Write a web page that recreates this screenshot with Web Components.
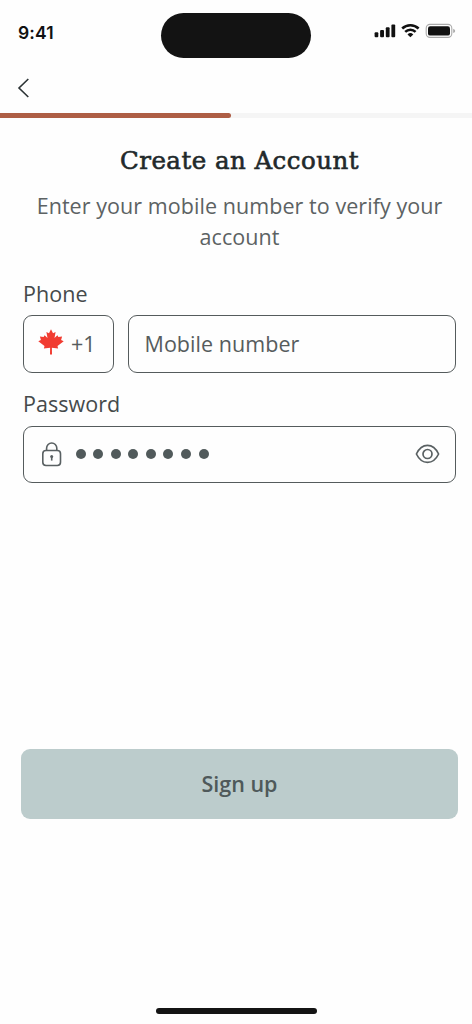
<!DOCTYPE html>
<html lang="en">
<head>
<meta charset="utf-8">
<title>Create an Account</title>
<style>
html,body{margin:0;background:#fefefe}
body{font-family:"Open Sans","Noto Sans",sans-serif;color:#4a4f50}
</style>
</head>
<body>
<signup-screen></signup-screen>
<script>
function define(name, html) {
  const tpl = document.createElement('template');
  tpl.innerHTML = html;
  customElements.define(name, class extends HTMLElement {
    constructor() {
      super();
      this.attachShadow({mode: 'open'}).appendChild(tpl.content.cloneNode(true));
    }
  });
}

define('status-bar', `
<style>
:host{display:grid;grid-template-columns:1fr 150px 1fr;height:58px;box-sizing:border-box;padding-top:13px;font-family:Inter,sans-serif;color:#111}
.time{font-size:17.5px;font-weight:600;line-height:22px;padding:9px 0 0 18px;letter-spacing:.15px}
.island{background:#131313;border-radius:23px;height:45px}
.sys{display:block;justify-self:end;margin:9px 16px 0 0}
</style>
<div class="time">9:41</div>
<div class="island"></div>
<svg class="sys" width="84" height="18" viewBox="372 22 84 18">
<g fill="#111"><rect x="374.6" y="32.3" width="3.7" height="4.9" rx="1"/><rect x="380.1" y="30" width="3.9" height="7.2" rx="1"/><rect x="385.8" y="27.3" width="3.8" height="9.9" rx="1"/><rect x="391.4" y="24.4" width="3.8" height="12.8" rx="1"/></g>
<g fill="none" stroke="#111" stroke-width="2.5"><path d="M402.2 28.5A11.8 11.8 0 0 1 418.6 28.5"/><path d="M405.2 31.9A7.3 7.3 0 0 1 415.6 31.9"/></g>
<path d="M410.4 37.2L407.5 34.5A4.2 4.2 0 0 1 413.3 34.5Z" fill="#111"/>
<rect x="426.2" y="24.4" width="25.6" height="13" rx="3.8" fill="none" stroke="#aaa" stroke-width="1.1"/>
<rect x="428" y="26.2" width="22" height="9.4" rx="2.2" fill="#111"/>
<path d="M453.2 28.7q2 .7 2 2.2t-2 2.2z" fill="#aaa"/>
</svg>`);

define('nav-bar', `
<style>
:host{display:flex;align-items:center;height:55px;padding-left:16px}
svg{margin-top:4px}
</style>
<svg width="16" height="22" viewBox="16 77 16 22"><path d="M28.3 79L19 88L28.3 97" fill="none" stroke="#2c3335" stroke-width="1.6"/></svg>`);

define('progress-bar', `
<style>
:host{display:block;height:5px;background:#f5f5f5}
div{width:230.5px;height:5px;background:#ae5e45;border-radius:0 2.5px 2.5px 0}
</style>
<div></div>`);

define('page-heading', `
<style>
:host{display:block;text-align:center;padding:26px 14px 0 21px}
h1{margin:0;font:400 24.5px/34px "DejaVu Serif",serif;letter-spacing:.46px;color:#22292b;-webkit-text-stroke:.6px #22292b;white-space:nowrap}
p{margin:12px 0 0;font-size:21.5px;line-height:31px;letter-spacing:.06px;color:#5c6263}
</style>
<h1><slot name="title"></slot></h1>
<p><slot></slot></p>`);

define('form-field', `
<style>
:host{display:block}
label{display:block;font-size:21.5px;line-height:30px;height:var(--label-height,36px);letter-spacing:.05px;color:#454a4b}
.row{display:flex;gap:13.5px}
</style>
<label><slot name="label"></slot></label>
<div class="row"><slot></slot></div>`);

define('input-box', `
<style>
:host{display:flex;align-items:center;box-sizing:border-box;height:57.5px;border:1.3px solid #555b5c;border-radius:9px;font-size:21.5px;letter-spacing:.05px;color:#565c5d;white-space:nowrap}
</style>
<slot></slot>`);

define('maple-leaf', `
<style>:host{display:block;width:26px;height:26px;margin-top:-3px}svg{display:block}</style>
<svg width="26" height="26" viewBox="0 0 26 26"><path fill="#f13c31" d="M13 .3L15 4.2L17.6 3L16.5 9L19.4 6.2L20.4 8.1L24.1 7.6L23.1 11L25.7 12.2L19.5 17.1L20.1 19.6L13.9 18.7L14 25.6H12L12.1 18.7L5.9 19.6L6.5 17.1L.3 12.2L2.9 11L1.9 7.6L5.6 8.1L6.6 6.2L9.5 9L8.4 3L11 4.2Z"/></svg>`);

define('lock-icon', `
<style>:host{display:block;width:20px;height:25px}svg{display:block}</style>
<svg width="20" height="25" viewBox="0 0 20 25" fill="none" stroke="#596062" stroke-width="1.6"><rect x=".8" y="8.5" width="17.7" height="15" rx="3.2"/><path d="M4.6 8.5V6.1a5.1 5.1 0 0 1 10.2 0V8.5"/><path d="M9.7 14.8V18.6" stroke-width="1.6"/><circle cx="9.7" cy="14.5" r="1.5" fill="#596062" stroke="none"/></svg>`);

define('eye-icon', `
<style>:host{display:block;width:25px;height:20px}svg{display:block}</style>
<svg width="25" height="20" viewBox="0 0 25 20" fill="none" stroke="#596062" stroke-width="1.7"><path d="M1.4 10C4 4.6 8 1.4 12.5 1.4S21 4.6 23.6 10C21 15.4 17 18.4 12.5 18.4S4 15.4 1.4 10Z" stroke-linejoin="round"/><circle cx="12.5" cy="10" r="4.5"/></svg>`);

define('password-dots', `
<style>
:host{display:flex;gap:7.6px}
i{width:10px;height:10px;border-radius:50%;background:#515a5b}
</style>
<i></i><i></i><i></i><i></i><i></i><i></i><i></i><i></i>`);

define('primary-button', `
<style>
:host{display:block}
button{display:block;width:100%;height:69.5px;padding:0;border:0;border-radius:9px;background:#bccccc;color:#4f595a;font:600 21.5px/30px "Open Sans",sans-serif}
</style>
<button><slot></slot></button>`);

define('home-indicator', `
<style>:host{display:block;width:161px;height:6px;border-radius:3px;background:#141414}</style>`);

define('signup-screen', `
<style>
:host{display:flex;flex-direction:column;width:472px;height:1024px;overflow:hidden;background:#fefefe}
.form{padding:27px 16px 0 23px}
form-field+form-field{margin-top:16.5px;--label-height:36.6px}
.code{width:91px;padding-left:14px;gap:7px;flex:none}
.num{flex:1;padding-left:16px}
.pw{flex:1;padding:0 15px 0 18px}
password-dots{margin-left:13.5px}
eye-icon{margin-left:auto}
primary-button{margin:auto 14px 0 21px}
home-indicator{margin:189.5px 0 10px 156px}
</style>
<status-bar></status-bar>
<nav-bar></nav-bar>
<progress-bar></progress-bar>
<page-heading><span slot="title">Create an Account</span>Enter your mobile number to verify your account</page-heading>
<div class="form">
<form-field><span slot="label">Phone</span>
<input-box class="code"><maple-leaf></maple-leaf><span>+1</span></input-box>
<input-box class="num"><span>Mobile number</span></input-box></form-field>
<form-field><span slot="label">Password</span>
<input-box class="pw"><lock-icon></lock-icon><password-dots></password-dots><eye-icon></eye-icon></input-box></form-field>
</div>
<primary-button>Sign up</primary-button>
<home-indicator></home-indicator>`);
</script>
</body>
</html>
